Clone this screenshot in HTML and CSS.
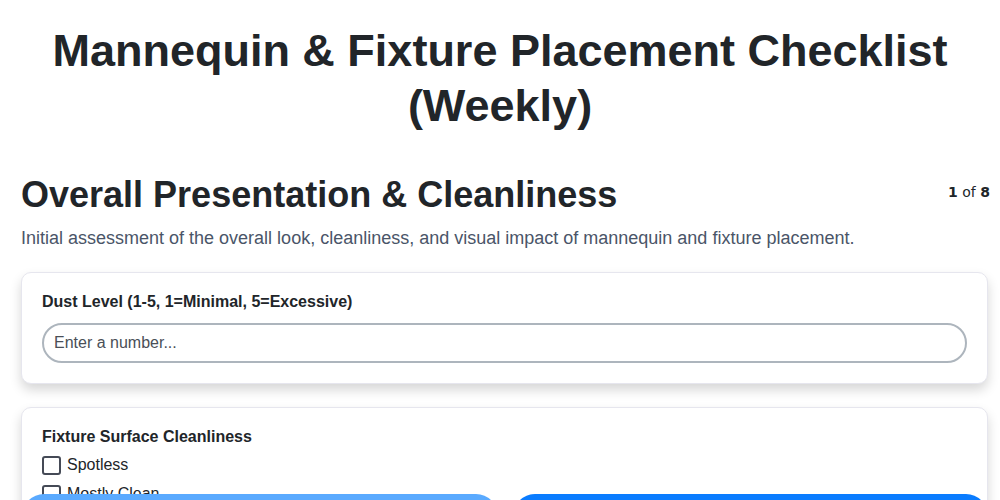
FILE: index.html
```html
<!DOCTYPE html>
<html>
<head>
<meta charset="utf-8">
<link rel="stylesheet" href="styles.css">
</head>
<body>
<div class="page">
  <h1 class="title">Mannequin &amp; Fixture Placement Checklist (Weekly)</h1>
  <div class="section-head">
    <h2 class="section-title">Overall Presentation &amp; Cleanliness</h2>
    <div class="progress"><b>1</b> of <b>8</b></div>
  </div>
  <p class="section-desc">Initial assessment of the overall look, cleanliness, and visual impact of mannequin and fixture placement.</p>

  <div class="card">
    <label class="field-label">Dust Level (1-5, 1=Minimal, 5=Excessive)</label>
    <input class="text-input" type="text" placeholder="Enter a number...">
  </div>

  <div class="card">
    <div class="field-label">Fixture Surface Cleanliness</div>
    <label class="check"><span class="box"></span>Spotless</label>
    <label class="check"><span class="box"></span>Mostly Clean</label>
    <label class="check"><span class="box"></span>Needs Cleaning</label>
  </div>
</div>
<div class="nav">
  <button class="btn btn-prev">Previous</button>
  <button class="btn btn-next">Next</button>
</div>
</body>
</html>
```

FILE: styles.css
```css
* { box-sizing: border-box; }
html, body { margin: 0; background: #fff; }
body {
  font-family: "Liberation Sans", Arial, sans-serif;
  color: #212529;
  overflow: hidden;
}
.page {
  padding: 20px 10px 0 21px;
}
.title {
  margin: 3px 0 40px -11px;
  text-align: center;
  font-size: 45px;
  line-height: 55px;
  font-weight: 700;
  color: #212529;
}
.section-head {
  display: flex;
  justify-content: space-between;
  align-items: center;
}
.section-title {
  margin: 0;
  font-size: 36px;
  line-height: 44px;
  font-weight: 700;
}
.progress {
  font-family: "DejaVu Sans", sans-serif;
  font-size: 14px;
  color: #212529;
  margin-top: -6px;
}
.section-desc {
  margin: 9px 0 22px;
  font-size: 18px;
  line-height: 24px;
  color: #4a5568;
}
.card {
  margin: 0 2px 23px 0;
  background: #fff;
  border: 1px solid #e6e6ee;
  border-radius: 10px;
  padding: 19px 20px 20px 20px;
  box-shadow: 0 6px 12px rgba(0,0,0,0.16);
  display: flex;
  flex-direction: column;
}
.field-label {
  font-size: 16px;
  font-weight: 700;
  line-height: 20px;
  margin-bottom: 8px;
  color: #212529;
}
.text-input {
  height: 40px;
  width: 100%;
  margin-top: 3px;
  border: 2px solid #adb5bd;
  border-radius: 20px;
  padding: 0 10px;
  font-family: "Liberation Sans", Arial, sans-serif;
  font-size: 16px;
  color: #212529;
  outline: none;
}
.text-input::placeholder { color: #4a4f57; }
.check {
  display: flex;
  align-items: center;
  font-size: 16px;
  line-height: 20px;
  color: #212529;
  margin-bottom: 9px;
}
.box {
  width: 19px;
  height: 19px;
  border: 2px solid #454a56;
  border-radius: 3px;
  margin-right: 6px;
  flex: none;
}
.nav {
  position: fixed;
  left: 22px;
  right: 12px;
  top: 494px;
  display: flex;
  gap: 15px;
}
.btn {
  flex: 1;
  height: 50px;
  border: none;
  border-radius: 22px;
  color: #fff;
  font-family: "Liberation Sans", Arial, sans-serif;
  font-size: 16px;
  font-weight: 700;
}
.btn-prev { background: #5aaaff; }
.btn-next { background: #0a7cff; }
```
